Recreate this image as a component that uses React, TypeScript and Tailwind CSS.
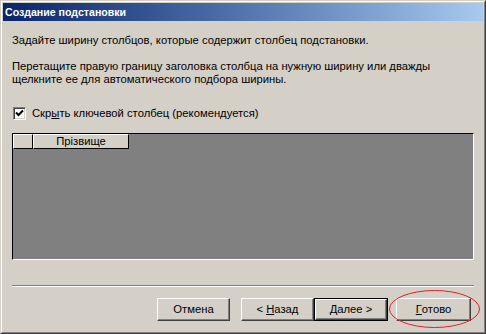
import React from 'react';

const bevel =
  'border border-t-white border-l-white border-r-[#404040] border-b-[#404040] shadow-[inset_-1px_-1px_0_#808080]';

const Button: React.FC<{ className?: string; isDefault?: boolean; children: React.ReactNode }> = ({
  className = '',
  isDefault = false,
  children,
}) => {
  if (isDefault) {
    return (
      <div className={`h-[23px] border border-black ${className}`}>
        <div className={`h-full flex items-center justify-center ${bevel}`}>{children}</div>
      </div>
    );
  }
  return (
    <div className={`h-[23px] flex items-center justify-center ${bevel} ${className}`}>{children}</div>
  );
};

export default function App() {
  return (
    <div className="w-[486px] h-[334px] relative bg-[#d4d0c8] text-black text-[11.25px] leading-[13px] font-['Liberation_Sans',Tahoma,Arial,sans-serif] border border-t-[#d4d0c8] border-l-[#d4d0c8] border-r-[#404040] border-b-[#404040]">
      <div className="h-full border border-t-white border-l-white border-r-[#808080] border-b-[#808080] p-px flex flex-col">
        {/* Title bar */}
        <div className="h-[18px] shrink-0 flex items-center pl-[2px] bg-gradient-to-r from-[#0a246a] to-[#a6caf0]">
          <span className="text-white font-bold text-[10.6px]">Создание подстановки</span>
        </div>

        <div className="flex flex-col px-[9px]">
          <p className="mt-[13px]">Задайте ширину столбцов, которые содержит столбец подстановки.</p>

          <p className="mt-[13px]">
            Перетащите правую границу заголовка столбца на нужную ширину или дважды
            <br />
            щелкните ее для автоматического подбора ширины.
          </p>

          {/* Checkbox */}
          <div className="mt-[21px] h-[13px] flex items-center">
            <div className="ml-px w-[13px] h-[13px] bg-white border border-t-[#808080] border-l-[#808080] border-r-white border-b-white shadow-[inset_1px_1px_0_#404040,inset_-1px_-1px_0_#d4d0c8] flex items-center justify-center">
              <svg width="9" height="9" viewBox="0 0 9 9">
                <path d="M1 3.5 L3.5 6 L8 1.5" fill="none" stroke="black" strokeWidth="2" />
              </svg>
            </div>
            <span className="ml-[6px]">
              Скр<span className="underline underline-offset-1">ы</span>ть ключевой столбец (рекомендуется)
            </span>
          </div>

          {/* Grid */}
          <div className="mt-[13px] h-[127px] bg-[#808080] border border-t-black border-l-black border-r-white border-b-white">
            <div className="flex h-[15px]">
              <div className="w-[20px] bg-[#d4d0c8] border-r border-b border-black border-l border-l-white border-t border-t-white" />
              <div className="w-[96px] bg-[#d4d0c8] border-r border-b border-black border-l border-l-white border-t border-t-white flex items-center justify-center">
                Прізвище
              </div>
            </div>
          </div>

          {/* Separator */}
          <div className="mt-[25px] h-[2px] border-t border-t-[#808080] border-b border-b-white" />

          {/* Buttons */}
          <div className="mt-[11px] flex">
            <Button className="ml-[145px] w-[73px]">Отмена</Button>
            <Button className="ml-[11px] w-[73px]">
              &lt; <span className="underline underline-offset-1 ml-[3px]">Н</span>азад
            </Button>
            <Button isDefault className="w-[74px]">
              <span>
                <span className="underline underline-offset-1">Д</span>алее &gt;
              </span>
            </Button>
            <Button className="ml-[8px] w-[75px]">
              <span className="underline underline-offset-1">Г</span>отово
            </Button>
          </div>
        </div>
      </div>

      {/* Red annotation ellipse */}
      <svg className="absolute left-[387px] top-[288px]" width="93" height="40" viewBox="0 0 93 40">
        <ellipse cx="46.5" cy="20" rx="45" ry="18.5" fill="none" stroke="#e0202a" strokeWidth="1" />
      </svg>
    </div>
  );
}
